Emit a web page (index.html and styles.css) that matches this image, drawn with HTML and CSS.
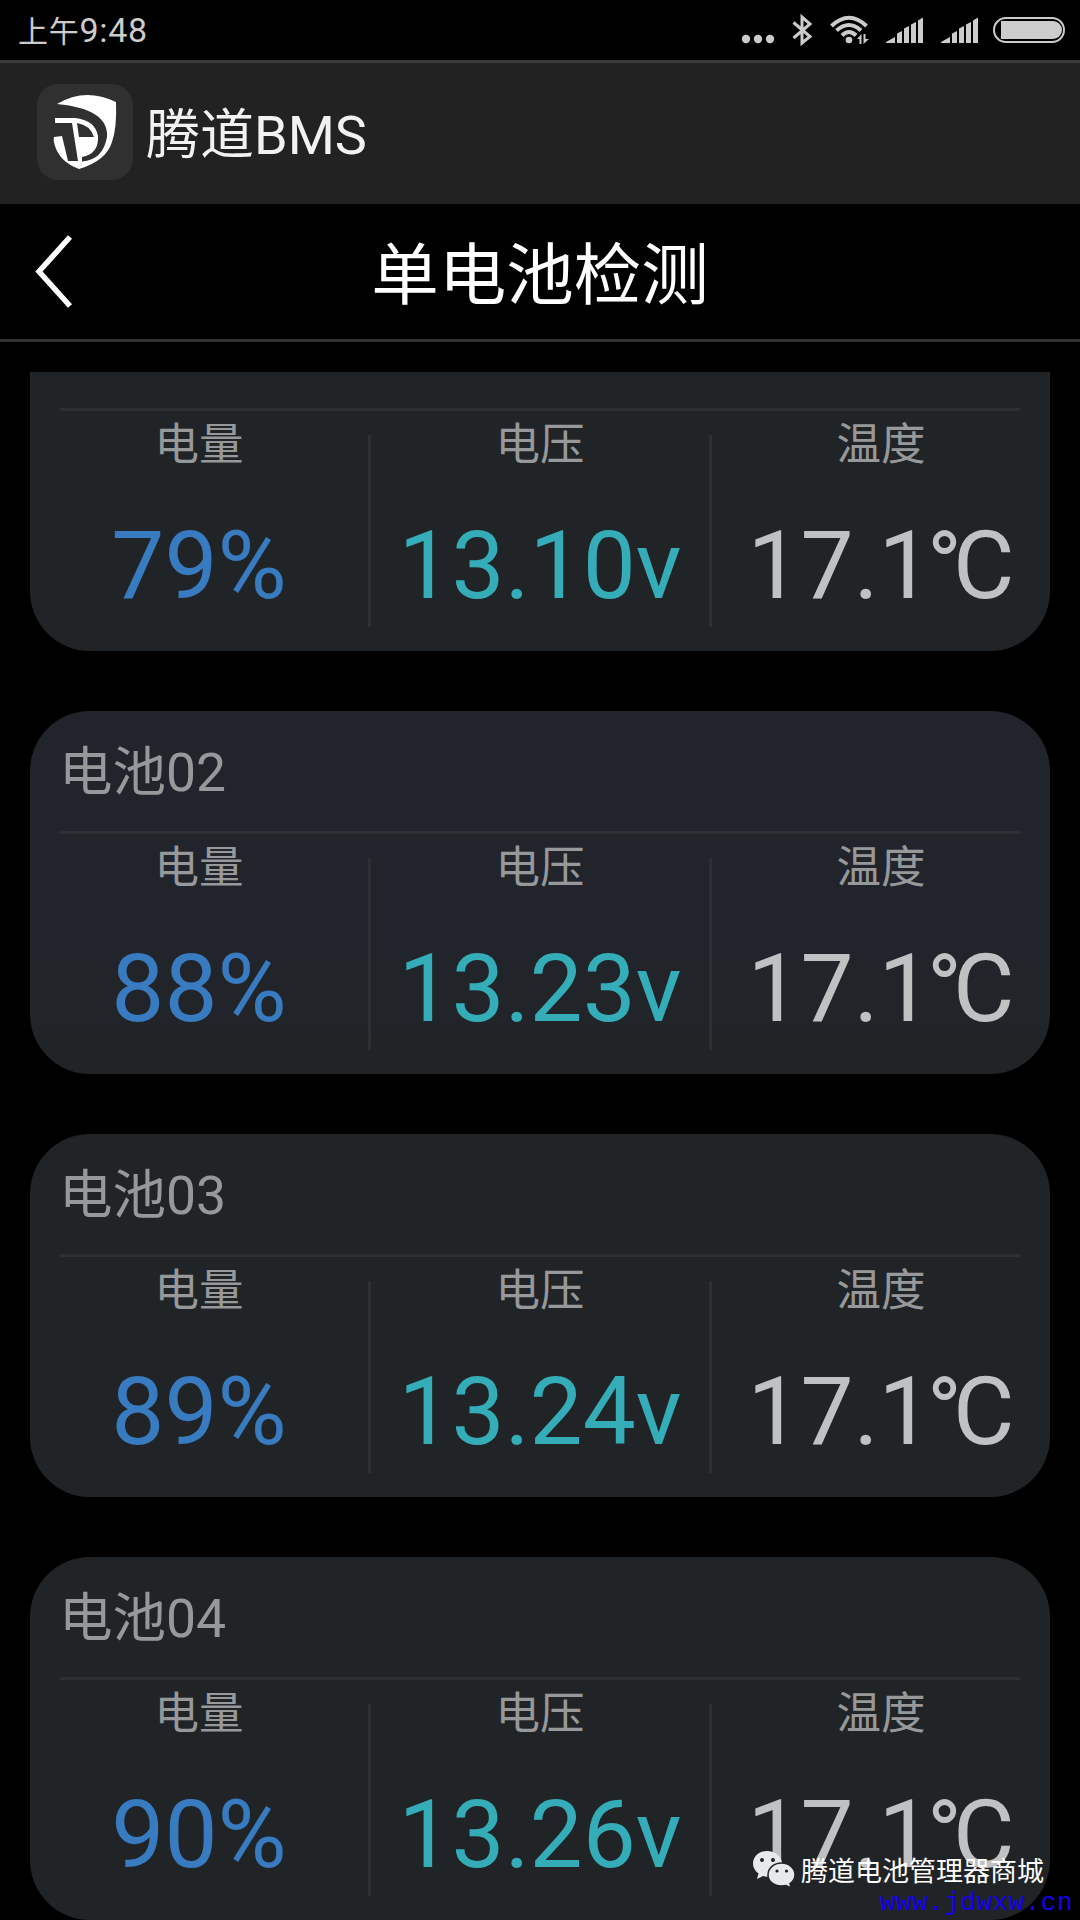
FILE: index.html
```
<!DOCTYPE html>
<html lang="zh-CN">
<head>
  <meta charset="utf-8">
  <title>单电池检测</title>
  <meta name="viewport" content="width=device-width, initial-scale=1.0">
  <link rel="stylesheet" href="styles.css">
</head>
<body>
  <div class="status-bar">
    <div class="time"><span class="ampm">上午</span>9:48</div>
    <svg class="status-icons" width="360" height="60" viewBox="0 0 360 60">
      <circle cx="26" cy="39" r="4.2"/>
      <circle cx="38" cy="39" r="4.2"/>
      <circle cx="50" cy="39" r="4.2"/>
      <!-- bluetooth -->
      <path class="line" d="M73.5 22.5 L90 36.5 L82 43 V17 L90 24 L73.5 38" stroke-width="3"/>
      <!-- wifi -->
      <path class="line" d="M111.5 26 Q129 9.5 146.5 26" stroke-width="4"/>
      <path class="line" d="M116.5 30.5 Q129 19.5 141 30.5" stroke-width="4"/>
      <path class="line" d="M122 35.5 Q129 28.5 136 35.5" stroke-width="4"/>
      <circle cx="129" cy="40" r="3.3"/>
      <path d="M137 39 L141.5 34 V44 H139.5 V39 Z M143.5 34 H145.5 V39 H149 L143.5 44 Z"/>
      <!-- signal x2 -->
      <path id="signal" d="M166 43 V42 L175 37 V43 Z M177 43 V33.5 L182 31 V43 Z M184 43 V28.5 L189 26 V43 Z M191 43 V24.5 L196 22 V43 Z M198 43 V20.5 L203 17.5 V43 Z"/>
      <use href="#signal" x="55"/>
      <!-- battery -->
      <rect class="line" x="274" y="18" width="70" height="24" rx="12" stroke-width="2"/>
      <path d="M281 21 H333 A9 9 0 0 1 333 39 H281 Z"/>
    </svg>
  </div>

  <div class="app-header">
    <svg class="logo" width="96" height="96" viewBox="0 0 96 96">
      <rect class="logo-bg" width="96" height="96" rx="21"/>
      <path d="M20 20 Q48 3 79 18 Q80 44 75 58 Q69 77 42 85 Q23 78 18 62 Q16 56 17 53 L25 52 L31 77 L41 77 L35 39 H18 V34 H38 Q58 36 61 52 Q62 70 45 73 V77.5 Q66 76 70 53 Q72 25 20 20 Z"/>
      <path class="logo-cut" d="M40 39 Q53 41 57 53 H42 Z"/>
    </svg>
    <span class="app-name">腾道BMS</span>
  </div>

  <div class="nav-bar">
    <svg class="back" width="40" height="76" viewBox="0 0 40 76">
      <path d="M35 3 L4 37.5 L35 72"/>
    </svg>
    <h1>单电池检测</h1>
  </div>

  <div class="list">
    <div class="card scrolled">
      <div class="card-title"></div>
      <div class="cells">
        <div class="cell"><div class="label">电量</div><div class="value power">79%</div></div>
        <div class="cell"><div class="label">电压</div><div class="value voltage">13.10v</div></div>
        <div class="cell"><div class="label">温度</div><div class="value temp">17.1<span class="degree">°</span>C</div></div>
      </div>
    </div>

    <div class="card tinted">
      <div class="card-title">电池02</div>
      <div class="cells">
        <div class="cell"><div class="label">电量</div><div class="value power">88%</div></div>
        <div class="cell"><div class="label">电压</div><div class="value voltage">13.23v</div></div>
        <div class="cell"><div class="label">温度</div><div class="value temp">17.1<span class="degree">°</span>C</div></div>
      </div>
    </div>

    <div class="card">
      <div class="card-title">电池03</div>
      <div class="cells">
        <div class="cell"><div class="label">电量</div><div class="value power">89%</div></div>
        <div class="cell"><div class="label">电压</div><div class="value voltage">13.24v</div></div>
        <div class="cell"><div class="label">温度</div><div class="value temp">17.1<span class="degree">°</span>C</div></div>
      </div>
    </div>

    <div class="card">
      <div class="card-title">电池04</div>
      <div class="cells">
        <div class="cell"><div class="label">电量</div><div class="value power">90%</div></div>
        <div class="cell"><div class="label">电压</div><div class="value voltage">13.26v</div></div>
        <div class="cell"><div class="label">温度</div><div class="value temp">17.1<span class="degree">°</span>C</div></div>
      </div>
    </div>
  </div>

  <div class="account">
    <svg width="44" height="38" viewBox="0 0 44 38">
      <path class="bubble" d="M15 1 C7 1 1 6.5 1 13.5 C1 17.5 3 21 6.5 23.5 L5 29 L11 26 Q14 27 17 26.5 C22 26.5 30 21 30 13.5 C30 6.5 23 1 15 1 Z"/>
      <path class="bubble edge" d="M29.5 13 C22 13 16 18 16 25 C16 31.5 22 36 29.5 36 L34 35.5 L39 38 L38 33.5 C41 31.5 43 28.5 43 25 C43 18 37 13 29.5 13 Z"/>
      <g class="eyes"><circle cx="10" cy="10" r="2"/><circle cx="21" cy="10" r="2"/><circle cx="25" cy="21" r="1.6"/><circle cx="34.5" cy="21" r="1.6"/></g>
    </svg>
    <span>腾道电池管理器商城</span>
  </div>
  <div class="site">www.jdwxw.cn</div>
</body>
</html>
```

FILE: styles.css
```
* {
  box-sizing: border-box;
}

body {
  margin: 0;
  width: 1080px;
  height: 1920px;
  overflow: hidden;
  position: relative;
  background: #000;
  color: #fff;
  font-family: Roboto, "Noto Sans CJK SC", sans-serif;
}

/* Status bar */
.status-bar {
  display: flex;
  justify-content: space-between;
  height: 60px;
  color: #ccc;
}
.time {
  padding-left: 18px;
  font-size: 34px;
  line-height: 60px;
  letter-spacing: 0.7px;
}
.ampm {
  font-size: 30px;
}
.status-icons {
  fill: #ccc;
}
.line {
  fill: none;
  stroke: #ccc;
}

/* App header */
.app-header {
  display: flex;
  align-items: center;
  height: 144px;
  padding: 0 0 4px 37px;
  border-top: 3px solid #3a3a3a;
  background: #222;
}
.logo {
  fill: #fff;
}
.logo-bg, .logo-cut {
  fill: #303030;
}
.app-name {
  margin-left: 13px;
  padding-top: 8px;
  font-size: 54px;
  line-height: 78px;
  color: #f2f2f2;
}

/* Page title */
.nav-bar {
  display: grid;
  grid-template-columns: 140px 1fr 140px;
  align-items: center;
  height: 138px;
  border-bottom: 3px solid #333;
}
.back {
  margin-left: 35px;
  fill: none;
  stroke: #fff;
  stroke-width: 5.5;
}
h1 {
  margin: 0;
  padding-top: 8px;
  text-align: center;
  font-size: 67.5px;
  font-weight: 400;
  line-height: 98px;
}

/* Battery list */
.list {
  display: flex;
  flex-direction: column;
  gap: 60px;
  padding: 30px 30px 0;
}
.card {
  flex: none;
  height: 363px;
  border-radius: 60px;
  background: #212426;
}
.card.tinted {
  background: linear-gradient(#21242b 60%, #212426);
}
/* first card is scrolled partly under the title bar */
.card.scrolled {
  height: 279px;
  border-radius: 0 0 60px 60px;
}
.card-title {
  height: 123px;
  margin: 0 30px;
  padding-top: 2px;
  border-bottom: 3px solid #2d3033;
  font-size: 53.5px;
  line-height: 120px;
  text-indent: -1px;
  color: #96989a;
}
.scrolled .card-title {
  height: 39px;
}
.cells {
  display: grid;
  grid-template-columns: repeat(3, 1fr);
  column-gap: 3px;
  height: 240px;
}
.cell {
  position: relative;
  padding-top: 1px;
  text-align: center;
}
.cell + .cell::before {
  content: "";
  position: absolute;
  left: -3px;
  top: 24px;
  width: 3px;
  height: 192px;
  background: #2d3033;
}
.label {
  height: 66px;
  font-size: 44.5px;
  line-height: 66px;
  color: #96989a;
}
.value {
  padding-top: 32px;
  font-size: 94.5px;
  line-height: 112px;
  white-space: nowrap;
}
.power {
  color: #387bc0;
}
.voltage {
  color: #34adb9;
}
.temp {
  color: #bfc1c2;
}
.degree {
  margin: 0 -9px 0 -5px;
}

/* Watermark */
.account {
  position: absolute;
  left: 752px;
  top: 1850px;
  display: flex;
  gap: 5px;
  font-size: 27px;
  line-height: 44px;
}
.bubble {
  fill: #e6eaed;
}
.edge {
  stroke: #212426;
  stroke-width: 1.5;
}
.eyes {
  fill: #212426;
}
.site {
  position: absolute;
  right: 7px;
  top: 1888px;
  font-family: "Liberation Mono", monospace;
  font-size: 26px;
  line-height: 30px;
  letter-spacing: 0.5px;
  color: #1400f0;
}
```
